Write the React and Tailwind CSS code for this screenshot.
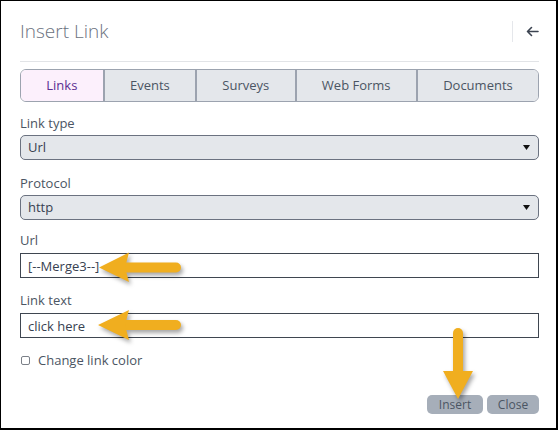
import React from "react";

const tabs = ["Links", "Events", "Surveys", "Web Forms", "Documents"];

function Caret() {
  return (
    <svg width="7" height="5" viewBox="0 0 7 5">
      <path d="M0 0h7L3.5 5z" fill="#111" />
    </svg>
  );
}

function SelectBox({ label, value, className = "" }) {
  return (
    <div className={className}>
      <div className="text-[13px] leading-[18px] text-[#4b5563]">{label}</div>
      <div className="mt-[3px] flex h-[25px] items-center justify-between rounded-[5px] border border-[#6b7280] bg-[#e4e7eb] pl-[7px] pr-[8px] text-[13px] text-[#374151]">
        <span>{value}</span>
        <Caret />
      </div>
    </div>
  );
}

function TextField({ label, value, className = "" }) {
  return (
    <div className={className}>
      <div className="text-[13px] leading-[18px] text-[#4b5563]">{label}</div>
      <input
        defaultValue={value}
        className="mt-[4px] block h-[25px] w-full border border-[#3f4650] bg-white pl-[7px] text-[13px] text-[#374151] outline-none"
      />
    </div>
  );
}

// orange call-out arrows drawn over the form
function Callouts() {
  const orange = "#f0ae1f";
  return (
    <svg
      className="pointer-events-none absolute inset-0 drop-shadow-[2px_3px_2px_rgba(0,0,0,0.35)]"
      width="558"
      height="430"
      viewBox="0 0 558 430"
    >
      <line x1="122" y1="266.5" x2="175" y2="266.5" stroke={orange} strokeWidth="10" strokeLinecap="round" />
      <path d="M98 266.5L128 251.5L124 266.5L128 281z" fill={orange} />
      <line x1="122" y1="324" x2="175" y2="324" stroke={orange} strokeWidth="10" strokeLinecap="round" />
      <path d="M97 324L128 309L124 324L128 339z" fill={orange} />
      <line x1="457" y1="332" x2="457" y2="375" stroke={orange} strokeWidth="10" strokeLinecap="round" />
      <path d="M442 370L472 370L457 398z" fill={orange} />
    </svg>
  );
}

export default function App() {
  return (
    <div className="relative h-[430px] w-[558px] overflow-hidden border-l border-t border-b-2 border-r-2 border-black bg-white pl-[19px] pr-[17px] pt-[16px] font-['Open_Sans',sans-serif]">
      {/* header */}
      <div className="flex h-[28px] items-center">
        <h1 className="flex-1 text-[19px] font-light leading-[28px] text-[#6b7280]">Insert Link</h1>
        <div className="h-[21px] w-px bg-[#e5e7eb]" />
        <button className="ml-[13px] flex h-[28px] items-center">
          <svg width="13" height="11" viewBox="0 0 13 11" fill="none" stroke="#3b4350" strokeWidth="1.6" strokeLinecap="round" strokeLinejoin="round">
            <path d="M12 5.5H1.5M5.5 1.5L1.5 5.5L5.5 9.5" />
          </svg>
        </button>
      </div>
      <div className="mt-[16px] h-px bg-[#e2e4e7]" />

      {/* tabs */}
      <div className="mt-[7px] flex h-[33px] overflow-hidden rounded-[6px] border-[1.5px] border-[#9ca3af]">
        {tabs.map((t, i) => (
          <div
            key={t}
            className={`flex flex-auto items-center justify-center text-[13px] ${
              i > 0 ? "border-l-2 border-[#9ca3af]" : ""
            } ${i === 0 ? "bg-[#fcf0fc] text-[#5b2d91]" : "bg-[#e4e7eb] text-[#4b5563]"}`}
          >
            {t}
          </div>
        ))}
      </div>

      <SelectBox label="Link type" value="Url" className="mt-[12px]" />
      <SelectBox label="Protocol" value="http" className="mt-[14px]" />
      <TextField label="Url" value="[--Merge3--]" className="mt-[11px]" />
      <TextField label="Link text" value="click here" className="mt-[13px]" />

      <label className="mt-[13px] flex items-center text-[13px] leading-[18px] text-[#4b5563]">
        <span className="ml-[1px] h-[9px] w-[9px] rounded-[2px] border border-[#7b8088] bg-white" />
        <span className="ml-[8px]">Change link color</span>
      </label>

      <div className="mt-[26px] flex justify-end gap-[4px]">
        <button className="h-[19px] w-[56px] rounded-[5px] bg-[#a6aeb9] text-[12px] leading-[19px] text-[#4b5563]">Insert</button>
        <button className="h-[19px] w-[52px] rounded-[5px] bg-[#a6aeb9] text-[12px] leading-[19px] text-[#4b5563]">Close</button>
      </div>

      <Callouts />
    </div>
  );
}
